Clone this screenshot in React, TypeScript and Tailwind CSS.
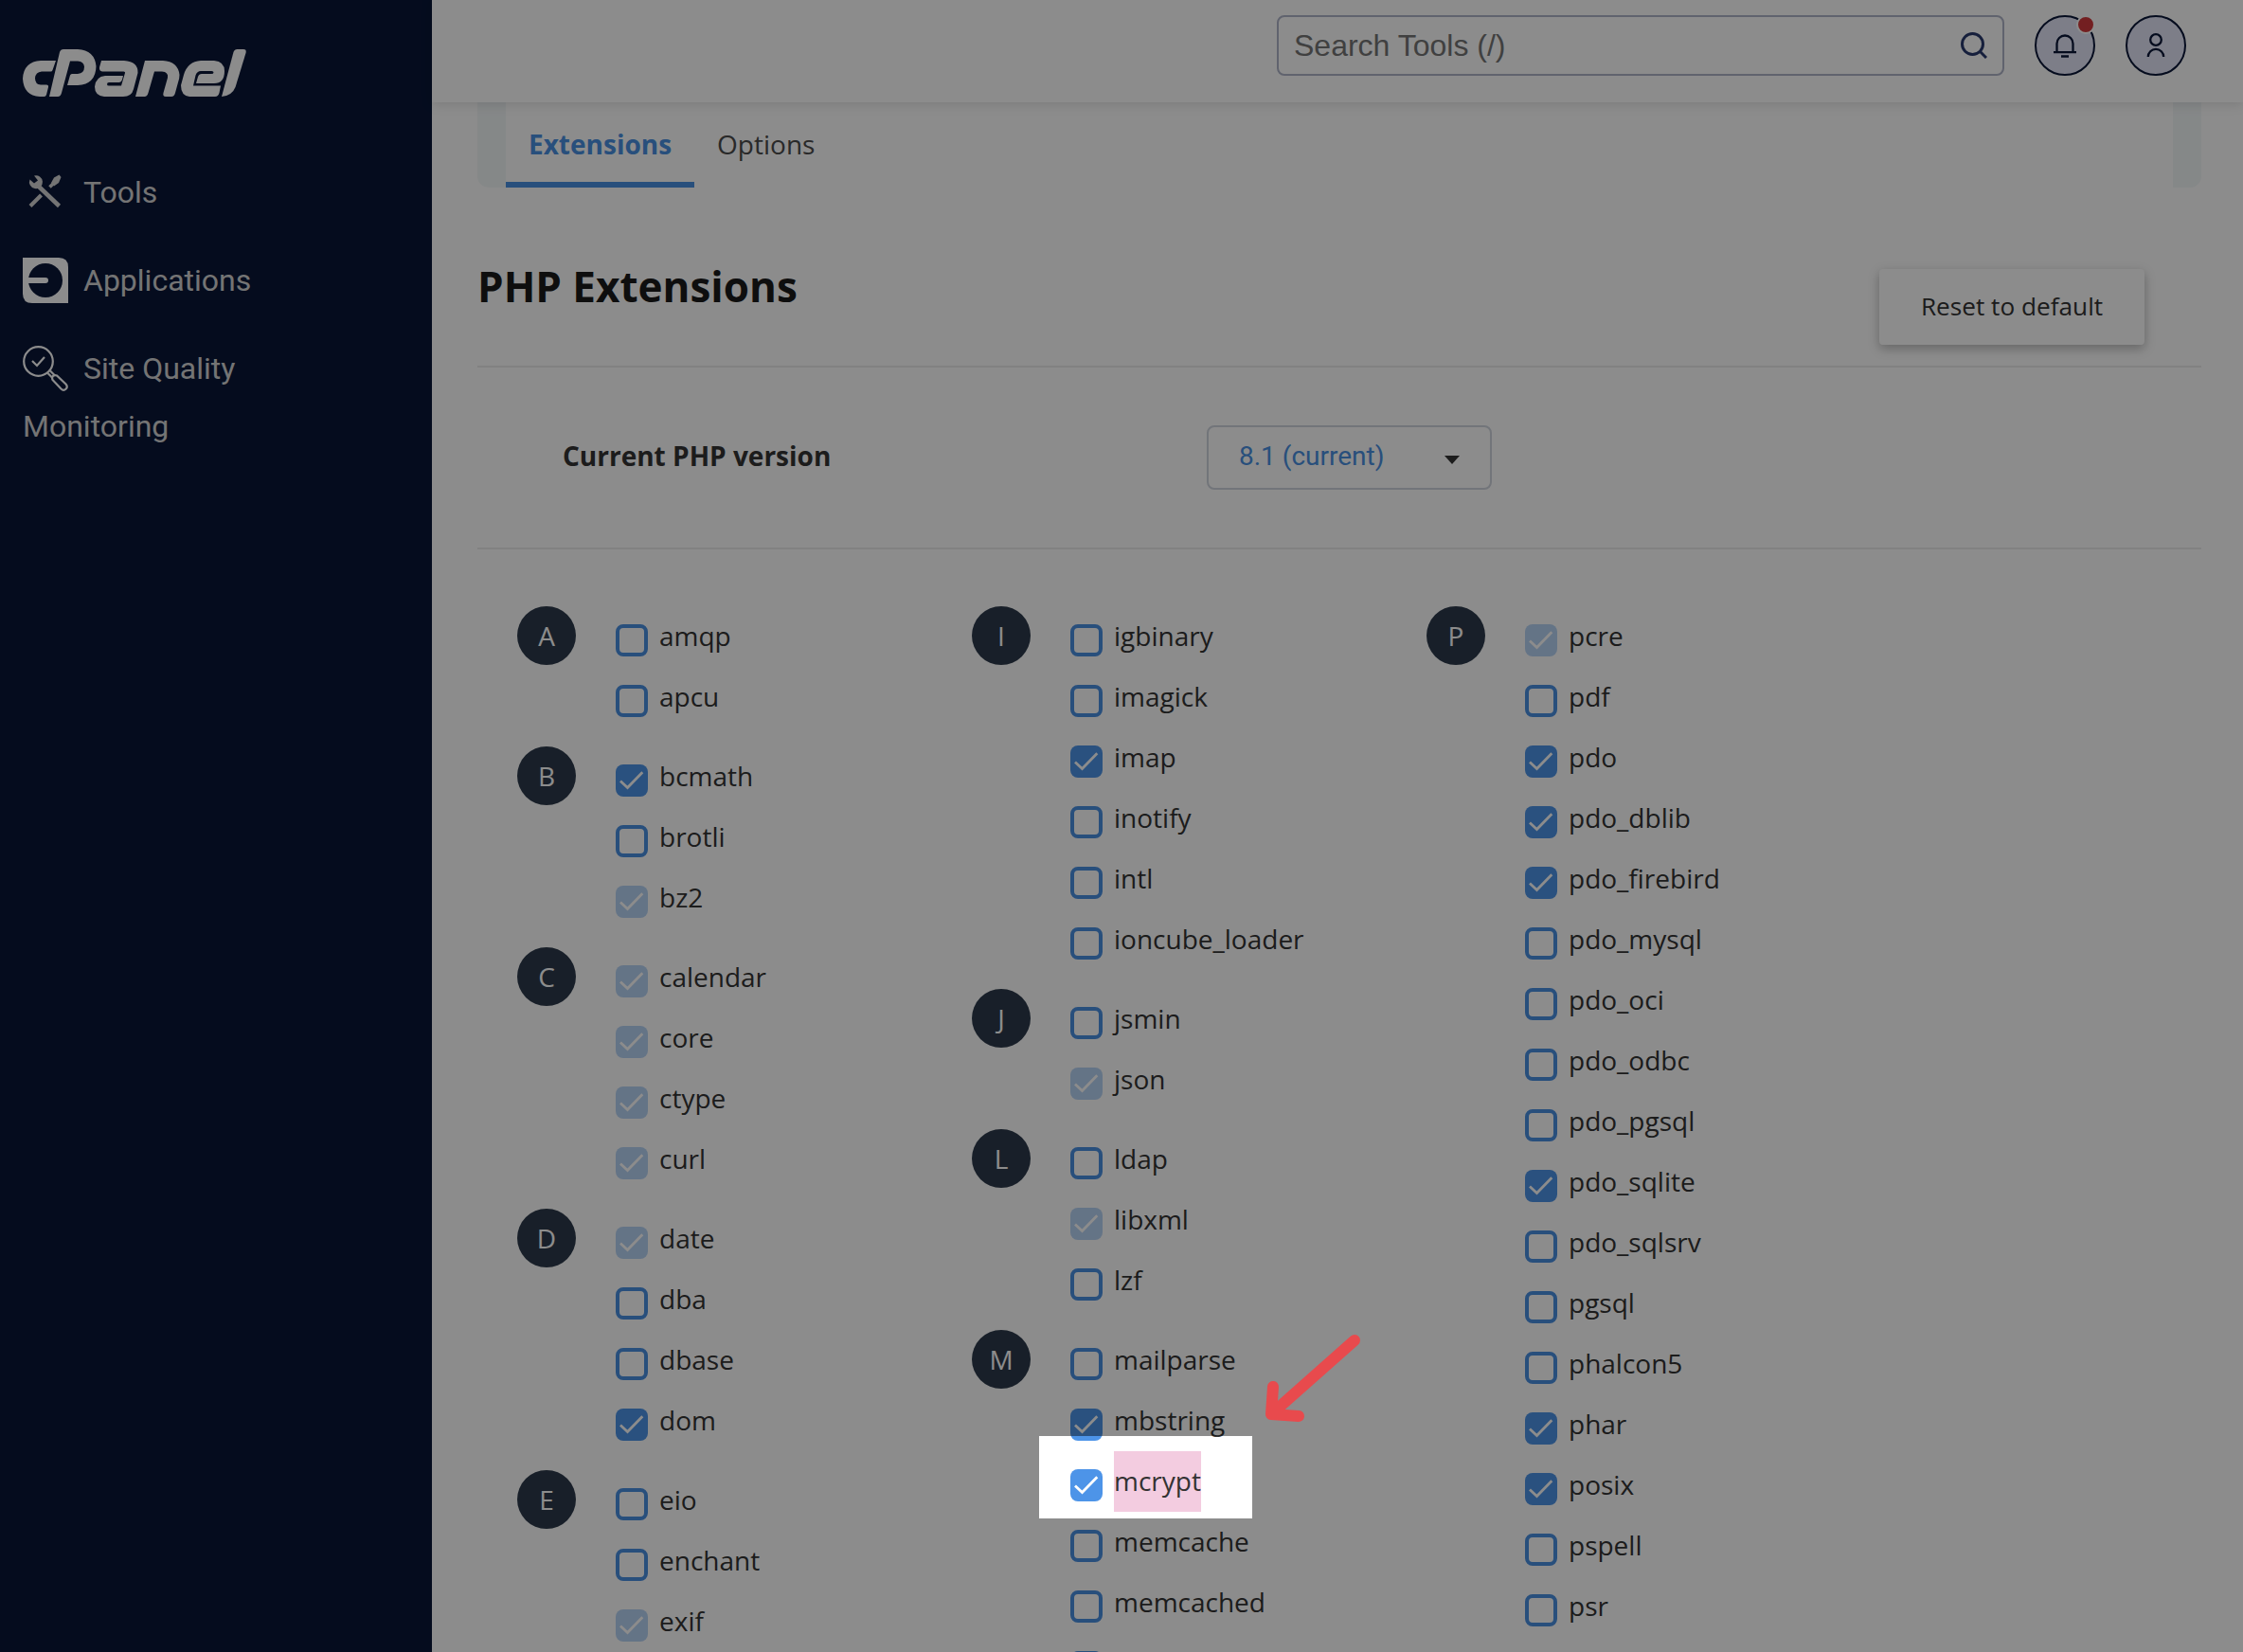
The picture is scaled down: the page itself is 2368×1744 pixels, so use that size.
import React from "react";

type State = "off" | "on" | "locked";
type Item = [string, State];
type Group = { letter: string; items: Item[] };

const columns: Group[][] = [
  [
    { letter: "A", items: [["amqp", "off"], ["apcu", "off"]] },
    { letter: "B", items: [["bcmath", "on"], ["brotli", "off"], ["bz2", "locked"]] },
    { letter: "C", items: [["calendar", "locked"], ["core", "locked"], ["ctype", "locked"], ["curl", "locked"]] },
    { letter: "D", items: [["date", "locked"], ["dba", "off"], ["dbase", "off"], ["dom", "on"]] },
    { letter: "E", items: [["eio", "off"], ["enchant", "off"], ["exif", "locked"]] },
  ],
  [
    {
      letter: "I",
      items: [["igbinary", "off"], ["imagick", "off"], ["imap", "on"], ["inotify", "off"], ["intl", "off"], ["ioncube_loader", "off"]],
    },
    { letter: "J", items: [["jsmin", "off"], ["json", "locked"]] },
    { letter: "L", items: [["ldap", "off"], ["libxml", "locked"], ["lzf", "off"]] },
    {
      letter: "M",
      items: [["mailparse", "off"], ["mbstring", "on"], ["mcrypt", "on"], ["memcache", "off"], ["memcached", "off"], ["", "off"]],
    },
  ],
  [
    {
      letter: "P",
      items: [
        ["pcre", "locked"], ["pdf", "off"], ["pdo", "on"], ["pdo_dblib", "on"], ["pdo_firebird", "on"], ["pdo_mysql", "off"],
        ["pdo_oci", "off"], ["pdo_odbc", "off"], ["pdo_pgsql", "off"], ["pdo_sqlite", "on"], ["pdo_sqlsrv", "off"], ["pgsql", "off"],
        ["phalcon5", "off"], ["phar", "on"], ["posix", "on"], ["pspell", "off"], ["psr", "off"],
      ],
    },
  ],
];

function Checkbox({ state }: { state: State }) {
  if (state === "off") {
    return <span className="mt-[19px] size-[34px] shrink-0 rounded-[8px] border-4 border-[#4a90e2] bg-white" />;
  }
  return (
    <span
      className={
        state === "on"
          ? "mt-[19px] size-[34px] shrink-0 rounded-[8px] bg-[#4d94e8]"
          : "mt-[19px] size-[34px] shrink-0 rounded-[8px] bg-[#b7d3f4]"
      }
    >
      <svg viewBox="0 0 34 34" className="size-[34px]" fill="none" stroke="#fff" strokeWidth="2.8">
        <path d="M5 17.500 L12.500 24.500 L28.300 8.200" />
      </svg>
    </span>
  );
}

function ExtensionGroup({ group }: { group: Group }) {
  return (
    <section className="mb-5 flex">
      <div className="flex size-[62px] items-center justify-center rounded-full bg-[#2d3a4b] text-[28px] text-white">
        {group.letter}
      </div>
      <ul className="ml-[42px]">
        {group.items.map(([name, state], i) => (
          <li key={i} className="flex h-16">
            <Checkbox state={state} />
            <span className={name === "mcrypt" ? "ml-3 bg-[#f3cce0] leading-[62px] text-[#333]" : "ml-3 leading-[62px] text-[#333]"}>
              {name}
            </span>
          </li>
        ))}
      </ul>
    </section>
  );
}

function Logo() {
  return (
    <svg viewBox="0 0 236 50" className="h-[50px] w-[236px]" fill="#fff" fillRule="evenodd">
      <path d="M35 12 L31.5 22 Q31 23.500 29.500 23.500 H20 Q13.500 24 13 30.500 Q13 37 19 37.500 H25 Q27.500 37.500 27 40 L25 48 Q24.500 50 22.500 50 H18 Q1 49 0 31 Q1 13 19 12 Z" />
      <path d="M39 3 Q40 0 43 0 H58 Q76 1 77.500 18 Q77 37 58 38 H47 L50 27.500 Q50.500 26 52 26 H58 Q65 25.500 65 18.500 Q64.500 13 58 12.500 H50 L41 46 Q40 50 37 50 H28 Z" />
      <path d="M83 12 H107 Q122 13 121.500 25 L117 42 Q115 50 106 50 H86 Q76 49 76 39.500 Q77 29 87 28 H106 L105 32 Q104 35 101.500 35 H91 Q89 35 89 37 Q89 38.500 91 38.500 H104 L108 25 Q108.500 23.500 106.500 23.500 H84 Q80.500 23 81 19 Z" />
      <path d="M129 12 H148 Q164 13 165.500 27 Q165.500 31 164 35 L161 46 Q160 50 157 50 H151 Q147.500 50 148.500 46 L153 30 Q154 24 147 23.500 H139 L132.500 46 Q131.500 50 128.500 50 H119 Z" />
      <path d="M188 12 H202 Q213 13 213 23 Q213 36 202 36 H183 L185 29 Q186 26 189 26 H199 Q201.500 26 201.500 24.500 Q201.500 23 199.500 23 H188 Q184 23 182.500 27.500 L180 38.500 H209 L207.500 46 Q206.500 50 203 50 H176 Q167 49 167 38 L170 27 Q174 13 188 12 Z" />
      <path d="M222.500 3 Q223.500 0 226.500 0 H233 Q236.500 0 235.500 4 L224.500 40 Q221 49 210 50 Z" />
    </svg>
  );
}

export default function App() {
  return (
    <div className="relative flex h-[1744px] w-[2368px] overflow-hidden bg-white font-['Open_Sans',sans-serif] text-[28px] text-[#333]">
      <aside className="h-full w-[456px] shrink-0 bg-[#0a1738] pl-6 pt-[52px] font-[Roboto,sans-serif] text-[32px] leading-[61px] text-[#d4d4d4]">
        <Logo />
        <nav className="mt-[71px] flex flex-col gap-8">
          <a className="flex h-[61px]">
            <svg viewBox="0 0 48 48" className="mt-[5px] mr-4 size-12" fill="none" stroke="currentColor">
              <path d="M16 18 L38.500 39.500" strokeWidth="4.500" />
              <path d="M8 39.500 L19.500 28" strokeWidth="4" />
              <path d="M28.500 19.500 L32 16" strokeWidth="3.500" />
              <path d="M30 15 L33 9.500 L38.500 6.500 L40.500 9 L38 15 L33 18.500 Z" fill="currentColor" stroke="none" />
              <path d="M7.500 11.500 L12 15.500 L16 12.500 L12 7.500 A7 7 0 1 1 7.500 11.500 Z" fill="currentColor" stroke="none" />
            </svg>
            Tools
          </a>
          <a className="flex h-[61px]">
            <svg viewBox="0 0 48 48" className="mt-[6px] mr-4 size-12">
              <path d="M0 0 H38 Q48 0 48 10 V48 H10 Q0 48 0 38 Z" fill="#fff" />
              <circle cx="24" cy="24" r="18" fill="#0a1738" />
              <path d="M5 21 H24 a3 3 0 0 1 0 6 H5 Z" fill="#fff" />
            </svg>
            Applications
          </a>
          <a className="block w-[300px]">
            <svg viewBox="0 0 48 48" className="float-left mt-[6px] mr-4 size-12" fill="none" stroke="#fff" strokeWidth="2.2">
              <circle cx="16.500" cy="16.500" r="15.300" />
              <path d="M10 16 L15 21 L23 12" />
              <path d="M26.500 29 L31 33.500 M29 26.500 L33.500 31" />
              <path d="M31.500 36 Q30.500 33 32 32 Q33.500 30.500 36 31.500 L45.500 40.500 Q48 43.500 45.500 45.800 Q43 48 40.500 45.500 Z" />
            </svg>
            Site Quality
            <span className="block">Monitoring</span>
          </a>
        </nav>
      </aside>

      <div className="flex min-w-0 flex-1 flex-col">
        <header className="z-10 flex h-[108px] shrink-0 items-start justify-end gap-8 bg-white pr-[60px] pt-4 shadow-[0_2px_12px_rgba(0,0,0,0.13)]">
          <div className="flex h-16 w-[768px] items-center justify-between rounded-[8px] border-2 border-[#b0b4c8] pl-4 pr-4 font-['Liberation_Sans',sans-serif] text-[32px] text-[#757575]">
            <span>Search Tools (/)</span>
            <svg viewBox="0 0 28 28" className="size-7" fill="none" stroke="#293a6e" strokeWidth="3">
              <circle cx="12.500" cy="12.500" r="11" />
              <path d="M20 20 L27 27" />
            </svg>
          </div>
          <button className="relative flex size-16 items-center justify-center rounded-full border-2 border-[#0a1738] bg-[#e4e6f8]">
            <svg viewBox="0 0 28 28" className="size-7" fill="none" stroke="#0a1738" strokeWidth="2.3">
              <path d="M5.500 21 V12 a8.500 8.500 0 0 1 17 0 V21 M2 21.200 H26" />
              <path d="M10 25.500 H18" strokeWidth="2.500" />
            </svg>
            <span className="absolute -top-[2px] right-[-2px] size-[20px] rounded-full border-2 border-white bg-[#d13a3c]" />
          </button>
          <button className="flex size-16 items-center justify-center rounded-full border-2 border-[#0a1738] bg-[#e4e6f8]">
            <svg viewBox="0 0 28 28" className="size-7" fill="none" stroke="#0a1738" strokeWidth="2.3">
              <circle cx="14" cy="8" r="5.800" />
              <path d="M5.800 26 a8.200 8.200 0 0 1 16.400 0" />
            </svg>
          </button>
        </header>

        <main className="flex-1 pl-12 pr-11">
          <div className="flex h-[90px] rounded-b-[12px] bg-[#f3f7f8] px-[30px]">
            <div className="flex flex-1 bg-white">
              <div className="h-[90px] border-b-[6px] border-[#4a90e2] px-6 pt-[25px] font-bold leading-[38px] text-[#4a90e2]">Extensions</div>
              <div className="px-6 pt-[25px] leading-[38px] text-[#4c4c4c]">Options</div>
            </div>
          </div>

          <div className="flex h-[190px] items-start justify-between border-b-2 border-[#ebebeb] pr-[60px]">
            <h1 className="mt-[74px] text-[44px] font-bold leading-[60px] text-[#1a1a1a]">PHP Extensions</h1>
            <button className="mt-[86px] h-20 w-[280px] rounded-[4px] bg-white text-[26.2px] text-[#333] shadow-[0_4px_12px_rgba(0,0,0,0.28)]">
              Reset to default
            </button>
          </div>

          <div className="flex h-[192px] items-center border-b-2 border-[#ebebeb] pl-[90px]">
            <div className="w-[680px] pb-[5px] font-bold">Current PHP version</div>
            <div className="flex h-[68px] w-[301px] items-center justify-between rounded-[8px] border-2 border-[#d0d5de] pl-8 pr-8 font-[Roboto,sans-serif] text-[28px] text-[#4a90e2]">
              <span className="pb-[2px]">8.1 (current)</span>
              <svg viewBox="0 0 16 9" className="mt-1 h-[9px] w-4" fill="#333">
                <path d="M0 0 H16 L8 9 Z" />
              </svg>
            </div>
          </div>

          <div className="flex pl-[42px] pt-[60px]">
            {columns.map((groups, i) => (
              <div key={i} className="w-[480px]">
                {groups.map((g) => (
                  <ExtensionGroup key={g.letter} group={g} />
                ))}
              </div>
            ))}
          </div>
        </main>
      </div>

      {/* Spotlight: everything outside this box is dimmed */}
      <div className="absolute left-[1097px] top-[1516px] z-20 h-[87px] w-[225px] shadow-[0_0_0_2400px_rgba(0,0,0,0.45)]" />
      <svg
        viewBox="0 0 110 100"
        className="absolute left-[1330px] top-[1404px] z-30 h-[100px] w-[110px]"
        fill="none"
        stroke="#e84a4d"
        strokeWidth="12"
        strokeLinecap="round"
        strokeLinejoin="round"
      >
        <path d="M100 11 L12 89 M14 60 L12 89 L41 91" />
      </svg>
    </div>
  );
}
